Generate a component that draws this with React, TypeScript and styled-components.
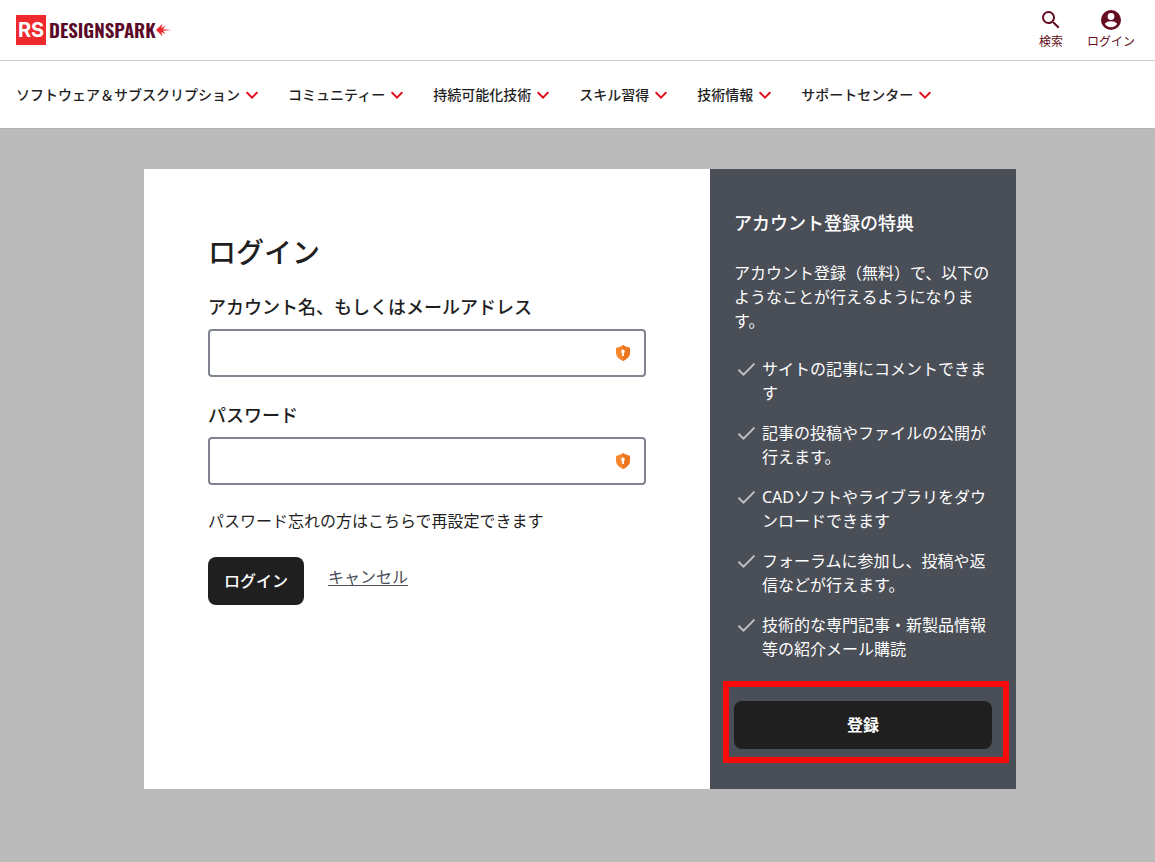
import React from "react";
import styled, { createGlobalStyle } from "styled-components";
import { MdSearch } from "react-icons/md";

const GlobalStyle = createGlobalStyle`
  *, *::before, *::after { box-sizing: border-box; }
  html { background: #bbbbbb; }
  body {
    margin: 0;
    background: #bbbbbb;
    color: #1f1f1f;
    font-family: "Noto Sans", "Noto Sans CJK JP", sans-serif;
    font-size: 16px;
    line-height: 24px;
  }
  button, input { font: inherit; color: inherit; }
  h1, h2, p, ul { margin: 0; padding: 0; }
`;

const Header = styled.header`
  display: flex;
  align-items: center;
  justify-content: space-between;
  height: 61px;
  padding: 0 20px 0 16px;
  background: #ffffff;
  border-bottom: 1px solid #cccccc;
`;

const LogoLink = styled.a`
  display: flex;
  align-items: center;
  color: #5a0a28;
  text-decoration: none;
`;

const LogoMark = styled.span`
  display: flex;
  align-items: center;
  justify-content: center;
  width: 30px;
  height: 30px;
  margin-right: 3px;
  background: #ee2a2e;
  color: #ffffff;
  font-family: "Inter", "Liberation Sans", sans-serif;
  font-size: 20px;
  font-weight: 700;
  line-height: 30px;
`;

const LogoWord = styled.span`
  padding-bottom: 2px;
  font-family: "Oswald", "Liberation Sans Narrow", "Liberation Sans", sans-serif;
  font-size: 19px;
  font-weight: 600;
  line-height: 28px;
`;

const Tools = styled.div`
  display: flex;
  gap: 24px;
`;

const ToolButton = styled.button`
  display: flex;
  flex-direction: column;
  align-items: center;
  padding: 0;
  border: 0;
  background: none;
  color: #640c20;
  font-size: 12px;
  line-height: 20px;
`;

const Nav = styled.nav`
  display: flex;
  flex-wrap: wrap;
  align-items: center;
  column-gap: 28px;
  min-height: 67px;
  padding: 0 16px;
  background: #ffffff;
`;

const NavButton = styled.button`
  display: flex;
  align-items: center;
  gap: 4px;
  padding: 0;
  border: 0;
  background: none;
  font-size: 14px;
  font-weight: 500;
  line-height: 20px;
`;

const Page = styled.main`
  padding: 40px 139px 72px 144px;
  border-top: 1px solid #b2b2b2;
`;

const Panel = styled.div`
  display: grid;
  grid-template-columns: minmax(0, 1fr) 306px;
  background: #ffffff;
`;

const LoginForm = styled.form`
  display: flex;
  flex-direction: column;
  gap: 24px;
  padding: 64px;
`;

const Title = styled.h1`
  margin-bottom: -2px;
  font-size: 28px;
  font-weight: 500;
  line-height: 38px;
`;

const Field = styled.div`
  display: flex;
  flex-direction: column;
  gap: 8px;
`;

const Label = styled.label`
  font-size: 18px;
  font-weight: 500;
  line-height: 28px;
`;

const InputFrame = styled.div`
  display: flex;
  align-items: center;
  height: 48px;
  padding: 0 14px;
  border: 2px solid #808491;
  border-radius: 4px;
`;

const Input = styled.input`
  flex: 1;
  min-width: 0;
  height: 40px;
  padding: 0;
  border: 0;
  outline: 0;
  background: none;
`;

const ResetLink = styled.a`
  align-self: flex-start;
  color: inherit;
  text-decoration: none;
`;

const Actions = styled.div`
  display: flex;
  align-items: flex-start;
  gap: 24px;
`;

const PrimaryButton = styled.button<{ $wide?: boolean }>`
  width: ${({ $wide }) => ($wide ? "100%" : "auto")};
  height: 48px;
  padding: 0 16px;
  border: 0;
  border-radius: 8px;
  background: #1f1f1f;
  color: #ffffff;
  font-weight: ${({ $wide }) => ($wide ? 700 : 500)};
`;

const CancelLink = styled.a`
  padding-top: 8px;
  color: #4a4e57;
  text-decoration: underline;
  text-underline-offset: 2px;
`;

const Benefits = styled.aside`
  padding: 40px 24px;
  background: #4a4e57;
  color: #ffffff;
`;

const BenefitsTitle = styled.h2`
  margin-bottom: 24px;
  font-size: 18px;
  font-weight: 500;
  line-height: 28px;
`;

const BenefitList = styled.ul`
  display: flex;
  flex-direction: column;
  gap: 16px;
  margin: 24px 0 40px;
  list-style: none;
`;

const Benefit = styled.li`
  display: flex;
  align-items: flex-start;
  gap: 4px;

  svg { flex: none; }
`;

const Highlight = styled.div`
  position: relative;

  &::after {
    content: "";
    position: absolute;
    inset: -20px -17px -14px -11px;
    border: 6px solid #fa0a0a;
    pointer-events: none;
  }
`;

const Chevron = () => (
  <svg width="16" height="16" viewBox="0 0 16 16" fill="none" aria-hidden="true">
    <path d="M3.2 5.8 8 10.6l4.8-4.8" stroke="#e0101c" strokeWidth="2" strokeLinecap="round" />
  </svg>
);

const Check = () => (
  <svg width="24" height="24" viewBox="0 0 24 24" fill="none" aria-hidden="true">
    <path d="M4.500 12.800l5 4.800L20.500 6.600" stroke="#bfc0c4" strokeWidth="2" />
  </svg>
);

const Account = () => (
  <svg width="24" height="24" viewBox="0 0 24 24" aria-hidden="true">
    <circle cx="12" cy="12" r="10" fill="#640c20" />
    <circle cx="12" cy="8.500" r="3.400" fill="#ffffff" />
    <path d="M5.800 15.800c1.300-1.700 3.600-2.500 6.200-2.500s4.900.8 6.200 2.500c-1.200 2.200-3.500 3.400-6.200 3.400s-5-1.200-6.200-3.400z" fill="#ffffff" />
  </svg>
);

const Shield = () => (
  <svg width="14" height="16" viewBox="0 0 14 16" aria-hidden="true">
    <path d="M7 0C9 1.700 11.300 2.200 13.300 2.800 14 3 14 3.500 14 4.200V7.500c0 4-3 6.700-7 8.500-4-1.800-7-4.500-7-8.500V4.200C0 3.500 0 3 .7 2.800 2.700 2.200 5 1.700 7 0z" fill="#f5872e" />
    <path d="M7 0C9 1.700 11.300 2.200 13.300 2.800 14 3 14 3.500 14 4.200V7.500c0 4-3 6.700-7 8.500z" fill="#ee7520" />
    <path d="M7 4.500a1.900 1.900 0 0 0-.9 3.500v3h1.800V8A1.900 1.900 0 0 0 7 4.500z" fill="#ffffff" />
  </svg>
);

const Spark = () => (
  <svg width="16" height="16" viewBox="0 0 16 16" aria-hidden="true">
    <path
      d="M0 8 6.500 1.800 5.300 5.900 9.500 3.800 7 7.200 15.500 8 7 8.800 9.500 12 5.300 10.100 6.500 14.200z"
      fill="#ee2a2e"
    />
  </svg>
);

const navItems = [
  "ソフトウェア＆サブスクリプション",
  "コミュニティー",
  "持続可能化技術",
  "スキル習得",
  "技術情報",
  "サポートセンター",
];

const benefits = [
  "サイトの記事にコメントできます",
  "記事の投稿やファイルの公開が行えます。",
  "CADソフトやライブラリをダウンロードできます",
  "フォーラムに参加し、投稿や返信などが行えます。",
  "技術的な専門記事・新製品情報等の紹介メール購読",
];

export default function App() {
  return (
    <div lang="ja">
      <GlobalStyle />
      <Header>
        <LogoLink href="#home">
          <LogoMark>RS</LogoMark>
          <LogoWord>DESIGNSPARK</LogoWord>
          <Spark />
        </LogoLink>
        <Tools>
          <ToolButton type="button">
            <MdSearch size={24} />
            検索
          </ToolButton>
          <ToolButton type="button">
            <Account />
            ログイン
          </ToolButton>
        </Tools>
      </Header>
      <Nav>
        {navItems.map((item) => (
          <NavButton type="button" key={item}>
            {item}
            <Chevron />
          </NavButton>
        ))}
      </Nav>
      <Page>
        <Panel>
          <LoginForm onSubmit={(event) => event.preventDefault()}>
            <Title>ログイン</Title>
            <Field>
              <Label htmlFor="account">アカウント名、もしくはメールアドレス</Label>
              <InputFrame>
                <Input id="account" type="text" autoComplete="username" />
                <Shield />
              </InputFrame>
            </Field>
            <Field>
              <Label htmlFor="password">パスワード</Label>
              <InputFrame>
                <Input id="password" type="password" autoComplete="current-password" />
                <Shield />
              </InputFrame>
            </Field>
            <ResetLink href="#reset">パスワード忘れの方はこちらで再設定できます</ResetLink>
            <Actions>
              <PrimaryButton type="submit">ログイン</PrimaryButton>
              <CancelLink href="#cancel">キャンセル</CancelLink>
            </Actions>
          </LoginForm>
          <Benefits>
            <BenefitsTitle>アカウント登録の特典</BenefitsTitle>
            <p>アカウント登録（無料）で、以下のようなことが行えるようになります。</p>
            <BenefitList>
              {benefits.map((benefit) => (
                <Benefit key={benefit}>
                  <Check />
                  <span>{benefit}</span>
                </Benefit>
              ))}
            </BenefitList>
            <Highlight>
              <PrimaryButton type="button" $wide>
                登録
              </PrimaryButton>
            </Highlight>
          </Benefits>
        </Panel>
      </Page>
    </div>
  );
}
